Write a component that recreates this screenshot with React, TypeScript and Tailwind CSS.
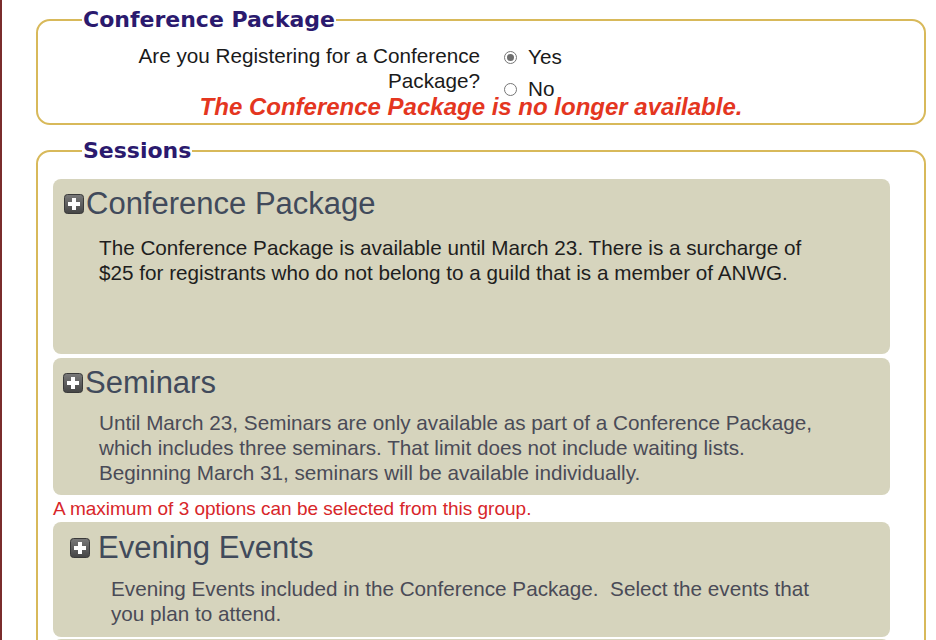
import React from "react";

function PlusIcon() {
  return (
    <svg width="20" height="20" viewBox="0 0 20 20" className="shrink-0">
      <defs>
        <linearGradient id="pg" x1="0" y1="0" x2="0" y2="1">
          <stop offset="0" stopColor="#7a7a7a" />
          <stop offset="1" stopColor="#454545" />
        </linearGradient>
      </defs>
      <rect x="0.5" y="0.5" width="19" height="19" rx="3" fill="url(#pg)" stroke="#3a3a3a" />
      <rect x="4" y="8" width="12" height="4" fill="#fff" />
      <rect x="8" y="4" width="4" height="12" fill="#fff" />
    </svg>
  );
}

function Radio({ checked, label }: { checked?: boolean; label: string }) {
  return (
    <div className="flex items-center gap-[11px] h-[32px]">
      <span className="shrink-0 w-[13px] h-[13px] rounded-full border border-[#767676] bg-white flex items-center justify-center">
        {checked && <span className="w-[7px] h-[7px] rounded-full bg-[#6e6e6e]" />}
      </span>
      <span className="text-[20.7px] text-[#1a1a1a]">{label}</span>
    </div>
  );
}

const legendCls = "px-[1px] text-[22px] leading-[26px] font-bold text-[#2b1a6e] font-['DejaVu_Sans',Verdana,sans-serif]";

export default function App() {
  return (
    <div className="min-h-[640px] bg-white border-l-2 border-[#7a2c2c] pl-[34px] pr-[10px] pt-[7px] font-['Liberation_Sans',Arial,sans-serif] overflow-hidden">
      {/* Conference Package */}
      <fieldset className="border-2 border-[#d8b95a] rounded-[14px] pt-[10px] pb-[4px]">
        <legend className={`ml-[44px] ${legendCls}`}>Conference Package</legend>
        <div className="flex h-[52px]">
          <div className="ml-[62px] w-[380px] text-right text-[20.7px] leading-[25px] text-[#1a1a1a]">
            Are you Registering for a Conference Package?
          </div>
          <div className="ml-[24px] -mt-[2px]">
            <Radio checked label="Yes" />
            <Radio label="No" />
          </div>
        </div>
        <p className="text-center pr-[20px] text-[24px] leading-[24px] font-bold italic text-[#e4361f]">
          The Conference Package is no longer available.
        </p>
      </fieldset>

      {/* Sessions */}
      <fieldset className="mt-[13px] border-2 border-[#d8b95a] rounded-[14px] pt-[15px] pl-[15px] pr-[34px] h-[520px]">
        <legend className={`ml-[29px] ${legendCls}`}>Sessions</legend>

        <div className="bg-[#d6d4bd] rounded-[8px] h-[175px] pt-[7px]">
          <div className="flex items-center pl-[11px] h-[36px]">
            <PlusIcon />
            <span className="text-[31px] leading-[36px] text-[#414a5b] ml-[2px]">Conference Package</span>
          </div>
          <p className="pl-[46px] mt-[13px] text-[20.7px] leading-[25px] text-[#1e1e1e]">
            The Conference Package is available until March 23. There is a surcharge of
            <br />
            $25 for registrants who do not belong to a guild that is a member of ANWG.
          </p>
        </div>

        <div className="mt-[4px] bg-[#d6d4bd] rounded-[8px] pt-[7px] pb-[10px]">
          <div className="flex items-center pl-[10px] h-[36px]">
            <PlusIcon />
            <span className="text-[31px] leading-[36px] text-[#414a5b] ml-[2px]">Seminars</span>
          </div>
          <p className="pl-[46px] mt-[9px] text-[20.7px] leading-[25px] text-[#4a4b57]">
            Until March 23, Seminars are only available as part of a Conference Package,
            <br />
            which includes three seminars. That limit does not include waiting lists.
            <br />
            Beginning March 31, seminars will be available individually.
          </p>
        </div>

        <p className="mt-[4px] mb-[3px] text-[19px] leading-[20px] text-[#d8262a]">
          A maximum of 3 options can be selected from this group.
        </p>

        <div className="bg-[#d6d4bd] rounded-[8px] pt-[8px] pb-[11px]">
          <div className="flex items-center pl-[17px] h-[36px]">
            <PlusIcon />
            <span className="text-[31px] leading-[36px] text-[#414a5b] ml-[8px]">Evening Events</span>
          </div>
          <p className="pl-[58px] mt-[10px] text-[20.7px] leading-[25px] text-[#4a4b57]">
            Evening Events included in the Conference Package.&nbsp; Select the events that
            <br />
            you plan to attend.
          </p>
        </div>

        <div className="mt-[2px] bg-[#d6d4bd] rounded-[8px] h-[80px]" />
      </fieldset>
    </div>
  );
}
